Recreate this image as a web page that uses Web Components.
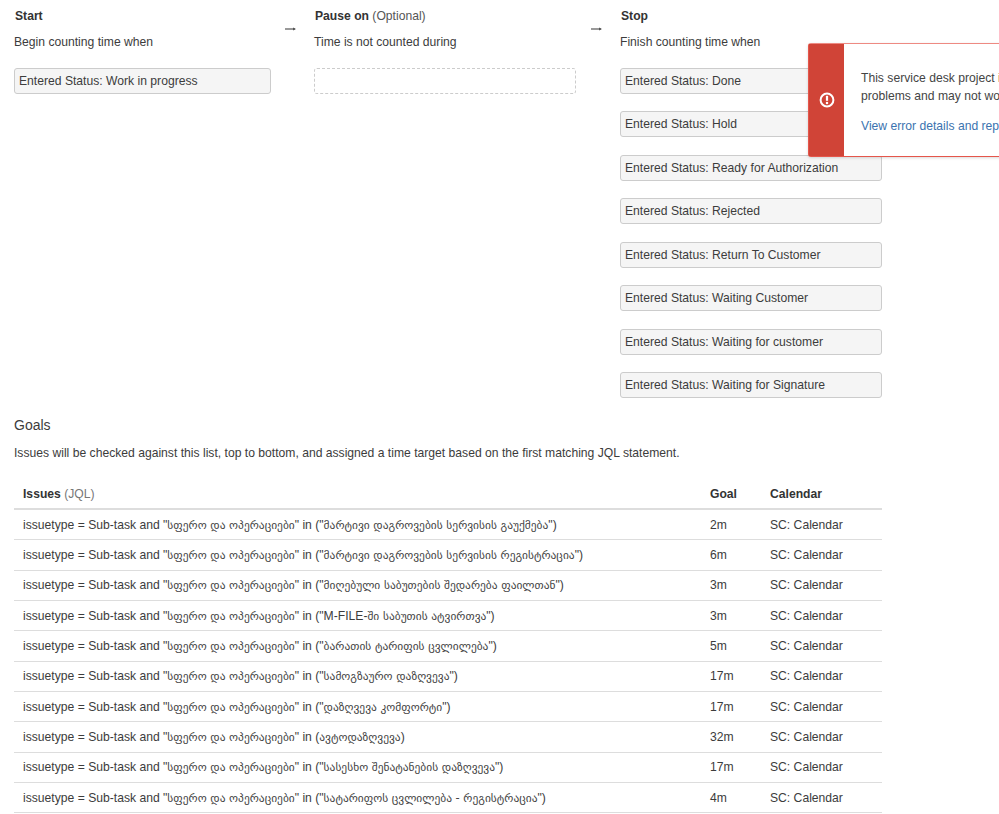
<!DOCTYPE html>
<html lang="en"><head><meta charset="utf-8"><title>SLA</title>
<style>
html,body{margin:0;padding:0;background:#fff;overflow:hidden;height:100%}
body{font-family:"Liberation Sans",Arial,sans-serif;font-size:12.15px;color:#333}
</style></head><body>
<sla-page>
<sla-column slot="cols" heading="Start" sub="Begin counting time when">
  <sla-status>Entered Status: Work in progress</sla-status>
</sla-column>
<sla-arrow slot="cols"></sla-arrow>
<sla-column slot="cols" heading="Pause on" note="(Optional)" sub="Time is not counted during">
  <sla-status empty></sla-status>
</sla-column>
<sla-arrow slot="cols"></sla-arrow>
<sla-column slot="cols" heading="Stop" sub="Finish counting time when">
  <sla-status>Entered Status: Done</sla-status>
  <sla-status>Entered Status: Hold</sla-status>
  <sla-status>Entered Status: Ready for Authorization</sla-status>
  <sla-status>Entered Status: Rejected</sla-status>
  <sla-status>Entered Status: Return To Customer</sla-status>
  <sla-status>Entered Status: Waiting Customer</sla-status>
  <sla-status>Entered Status: Waiting for customer</sla-status>
  <sla-status>Entered Status: Waiting for Signature</sla-status>
</sla-column>
<sla-goals slot="goals">
  <sla-goal goal="2m">("<sla-ka>მარტივი დაგროვების სერვისის გაუქმება</sla-ka>")</sla-goal>
  <sla-goal goal="6m">("<sla-ka>მარტივი დაგროვების სერვისის რეგისტრაცია</sla-ka>")</sla-goal>
  <sla-goal goal="3m">("<sla-ka>მიღებული საბუთების შედარება ფაილთან</sla-ka>")</sla-goal>
  <sla-goal goal="3m">("M-FILE-<sla-ka>ში საბუთის ატვირთვა</sla-ka>")</sla-goal>
  <sla-goal goal="5m">("<sla-ka>ბარათის ტარიფის ცვლილება</sla-ka>")</sla-goal>
  <sla-goal goal="17m">("<sla-ka>სამოგზაურო დაზღვევა</sla-ka>")</sla-goal>
  <sla-goal goal="17m">("<sla-ka>დაზღვევა კომფორტი</sla-ka>")</sla-goal>
  <sla-goal goal="32m">(<sla-ka>ავტოდაზღვევა</sla-ka>)</sla-goal>
  <sla-goal goal="17m">("<sla-ka>სასესხო შენატანების დაზღვევა</sla-ka>")</sla-goal>
  <sla-goal goal="4m">("<sla-ka>სატარიფოს ცვლილება - რეგისტრაცია</sla-ka>")</sla-goal>
</sla-goals>
<sla-flag slot="flag"></sla-flag>
</sla-page>
<script>
function def(name, css, html){
  customElements.define(name, class extends HTMLElement{
    connectedCallback(){
      if(this.shadowRoot) return;
      const r=this.attachShadow({mode:'open'});
      r.innerHTML='<style>'+css+'</style>'+(typeof html==='function'?html(this):html);
    }
  });
}
const esc=s=>(s||'');
def('sla-ka',`
  :host{display:inline;font-family:"DejaVu Sans",sans-serif;font-size:11.45px;color:#444}
`,`<slot></slot>`);
def('sla-page',`
  :host{display:block;position:relative;width:999px;height:814px;overflow:hidden;box-sizing:border-box;padding:0 0 0 14px}
  .cols{display:grid;grid-template-columns:257px 43px 262px 44px 262px;align-items:start;padding-top:9px}
`,`<div class="cols"><slot name="cols"></slot></div><slot name="goals"></slot><slot name="flag"></slot>`);
def('sla-column',`
  :host{display:block}
  h4{margin:0;font-size:12.15px;line-height:14px;font-weight:700;color:#333;padding-left:1px}
  h4 span{font-weight:400;color:#555}
  p{margin:12px 0 0;line-height:14px;color:#3c3c3c}
  .list{display:flex;flex-direction:column;gap:17.5px;margin-top:18.5px}
`,h=>`<h4>${esc(h.getAttribute('heading'))}${h.getAttribute('note')?' <span>'+h.getAttribute('note')+'</span>':''}</h4><p>${esc(h.getAttribute('sub'))}</p><div class="list"><slot></slot></div>`);
def('sla-arrow',`
  :host{display:block;box-sizing:border-box;padding:16px 4px 0 0;line-height:14px}
  svg{display:block;margin:0 auto}
`,`<svg width="13" height="8" viewBox="0 0 13 8" aria-hidden="true"><path d="M1 4h10" fill="none" stroke="#555" stroke-width="1.2"/><path d="M9 2.4l3 1.6-3 1.6z" fill="#555"/></svg>`);
def('sla-status',`
  :host{display:block;box-sizing:border-box;height:26px;line-height:24px;padding:0 4px;border:1px solid #ccc;border-radius:3px;background:#f5f5f5;color:#3c3c3c;white-space:nowrap}
  :host([empty]){background:#fff;border:1px dashed #ccc}
`,`<slot></slot>`);
def('sla-goals',`
  :host{display:block;width:868px}
  h3{margin:0;padding-top:16.5px;font-size:14px;line-height:20px;font-weight:400;color:#3c3c3c}
  p{margin:11px 0 0;line-height:14px;color:#3c3c3c}
  .head{display:grid;grid-template-columns:1fr 60px 112px;margin-top:20.5px;padding:0 0 0 9px;height:30px;align-items:center;border-bottom:2px solid #ddd;box-sizing:border-box;font-weight:700;color:#333}
  .head span span{font-weight:400;color:#777}
`,`<h3>Goals</h3><p>Issues will be checked against this list, top to bottom, and assigned a time target based on the first matching JQL statement.</p>
<div class="head"><span>Issues <span>(JQL)</span></span><span>Goal</span><span>Calendar</span></div><slot></slot>`);
def('sla-goal',`
  :host{display:grid;grid-template-columns:1fr 60px 112px;box-sizing:border-box;height:30.33px;padding:0 0 0 9px;align-items:center;border-bottom:1px solid #ddd;color:#3c3c3c}
`,h=>`<span>issuetype = Sub-task and "<sla-ka>სფერო და ოპერაციები</sla-ka>" in <slot></slot></span><span>${h.getAttribute('goal')}</span><span>SC: Calendar</span>`);
def('sla-flag',`
  :host{position:absolute;left:808px;top:42.5px;width:320px;height:114.5px;box-sizing:border-box;display:flex;background:#fff;border:1px solid #e5564b;border-top-color:#ee8a82;border-radius:3px;box-shadow:0 1px 3px rgba(0,0,0,.15)}
  .band{width:35px;flex:none;background:#d04437;display:flex;align-items:center;justify-content:center}
  .body{padding:26.5px 0 0 17px;white-space:nowrap;line-height:17.5px;color:#444}
  a{display:block;margin-top:13px;color:#3b73af;text-decoration:none}
`,`<div class="band"><svg width="16" height="16" viewBox="0 0 16 16" aria-hidden="true"><circle cx="8" cy="8" r="6.4" fill="none" stroke="#fff" stroke-width="2"/><rect x="6.9" y="3.8" width="2.2" height="5" fill="#fff"/><rect x="6.9" y="9.9" width="2.2" height="2.2" fill="#fff"/></svg></div>
<div class="body">This service desk project is having<br>problems and may not work correctly.<a href="#">View error details and report</a></div>`);
</script>
</body></html>
